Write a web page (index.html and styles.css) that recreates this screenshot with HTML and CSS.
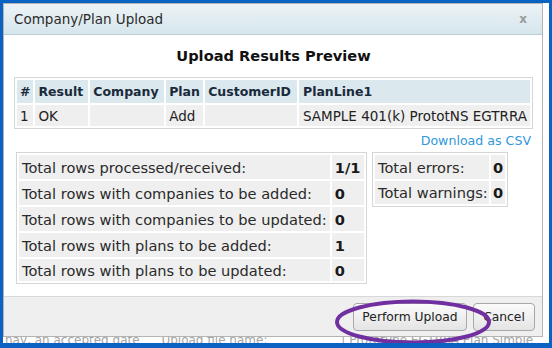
FILE: index.html
```html
<!DOCTYPE html>
<html lang="en">
<head>
  <meta charset="UTF-8">
  <title>Company/Plan Upload</title>
  <link rel="stylesheet" href="styles.css">
</head>
<body>
  <div class="frame">
    <div class="page-behind">
      <span class="behind-a">nay, an accepted date</span>
      <span class="behind-b">Upload file name:</span>
      <span class="behind-c">| Prototype EGTRRA Plan Simple</span>
    </div>

    <div class="dialog">
      <div class="titlebar">
        <span class="title">Company/Plan Upload</span>
        <span class="close">x</span>
      </div>

      <div class="content">
        <h2>Upload Results Preview</h2>

        <table class="preview">
          <tr>
            <th class="c-num">#</th>
            <th class="c-result">Result</th>
            <th class="c-company">Company</th>
            <th class="c-plan">Plan</th>
            <th class="c-cust">CustomerID</th>
            <th>PlanLine1</th>
          </tr>
          <tr>
            <td>1</td>
            <td>OK</td>
            <td></td>
            <td>Add</td>
            <td></td>
            <td>SAMPLE 401(k) PrototNS EGTRRA</td>
          </tr>
        </table>

        <div class="csv"><a href="#">Download as CSV</a></div>

        <div class="stats">
          <table class="totals totals-main">
            <tr><td>Total rows processed/received:</td><td class="val">1/1</td></tr>
            <tr><td>Total rows with companies to be added:</td><td class="val">0</td></tr>
            <tr><td>Total rows with companies to be updated:</td><td class="val">0</td></tr>
            <tr><td>Total rows with plans to be added:</td><td class="val">1</td></tr>
            <tr><td>Total rows with plans to be updated:</td><td class="val">0</td></tr>
          </table>
          <table class="totals totals-side">
            <tr><td>Total errors:</td><td class="val">0</td></tr>
            <tr><td>Total warnings:</td><td class="val">0</td></tr>
          </table>
        </div>
      </div>

      <div class="buttonpane">
        <button class="btn btn-upload">Perform Upload</button>
        <button class="btn btn-cancel">Cancel</button>
        <svg class="circle-mark" width="160" height="48" viewBox="0 0 160 48">
          <ellipse cx="80" cy="24" rx="76" ry="20.5" fill="none" stroke="#7030a0" stroke-width="4"/>
        </svg>
      </div>
    </div>
  </div>
</body>
</html>
```

FILE: styles.css
```css
* {
  box-sizing: border-box;
}
body {
  margin: 0;
  font-family: "DejaVu Sans", Verdana, sans-serif;
  font-size: 12px;
  color: #222;
}
.frame {
  position: relative;
  width: 552px;
  height: 348px;
  border: 3px solid #0a63c2;
  border-bottom-width: 5px;
  background: #fff;
  overflow: hidden;
}
.page-behind {
  position: absolute;
  left: 2px;
  top: 330px;
  width: 600px;
  font-size: 12px;
  color: #a4a4a4;
  white-space: nowrap;
}
.behind-a {
  margin-right: 18px;
}
.behind-b {
  margin-right: 70px;
}
.dialog {
  position: relative;
  width: 540px;
  height: 334px;
  border: 1px solid #b4b4b4;
  background: #fff;
  display: flex;
  flex-direction: column;
}
.titlebar {
  height: 31px;
  flex: none;
  display: flex;
  align-items: center;
  justify-content: space-between;
  padding: 0 15px 0 10px;
  background: linear-gradient(#ecf3f6, #d6e6ed);
  border-bottom: 1px solid #b9cdd6;
}
.title {
  font-size: 13.5px;
  color: #2a2a2a;
}
.close {
  font-size: 12px;
  font-weight: bold;
  color: #9a9a9a;
}
.content {
  flex: 1;
  padding: 0 9px 0 10px;
}
h2 {
  margin: 12px 0 13px;
  text-align: center;
  font-size: 14.6px;
  font-weight: bold;
  color: #111;
}
.preview {
  width: 519px;
  border: 1px solid #d6d6d6;
  border-spacing: 2px;
}
.preview th {
  height: 23px;
  padding: 0 3px;
  text-align: left;
  font-size: 12.5px;
  font-weight: bold;
  color: #1a2a3a;
  background: #dbe8ee;
}
.preview td {
  height: 21px;
  padding: 0 3px;
  font-size: 13.5px;
  background: #efefef;
  white-space: nowrap;
}
.preview th:last-child,
.preview td:last-child {
  padding-left: 4px;
}
.c-num { width: 15px; }
.c-result { width: 53px; }
.c-company { width: 74px; }
.c-plan { width: 37px; }
.c-cust { width: 92px; }
.csv {
  text-align: right;
  height: 23px;
  padding: 4px 2px 0 0;
  font-size: 12.6px;
}
.csv a {
  color: #2f97dc;
  text-decoration: none;
}
.stats {
  display: flex;
  align-items: flex-start;
  gap: 5px;
  padding-left: 2px;
}
.totals {
  border: 1px solid #d6d6d6;
  border-spacing: 2px;
  font-size: 14.6px;
  color: #2a2a2a;
}
.totals td {
  height: 24px;
  padding: 0 3px;
  background: #efefef;
  white-space: nowrap;
}
.totals-main {
  width: 351px;
}
.totals-main tr:last-child td {
  height: 22px;
}
.totals-side {
  width: 136px;
}
.totals-side td {
  padding: 0 1px 0 3px;
}
.totals-side tr:last-child td {
  height: 23px;
}
.totals .val {
  font-weight: bold;
  color: #1a1a1a;
  width: 34px;
}
.totals-side .val {
  width: 14px;
  padding-left: 2px;
}
.buttonpane {
  position: relative;
  flex: none;
  height: 40px;
  border-top: 1px solid #d8d8d8;
  background: #efefef;
  display: flex;
  justify-content: flex-end;
  align-items: center;
  gap: 6px;
  padding-right: 7px;
}
.btn {
  height: 28px;
  border: 1px solid #a8a8a8;
  border-radius: 4px;
  background: linear-gradient(#fbfbfb, #e4e4e4);
  font-family: "DejaVu Sans", Verdana, sans-serif;
  font-size: 12.3px;
  color: #222;
  padding: 0 6px;
}
.btn-upload {
  width: 114px;
}
.btn-cancel {
  width: 62px;
}
.circle-mark {
  position: absolute;
  left: 329px;
  top: 1px;
}
```
